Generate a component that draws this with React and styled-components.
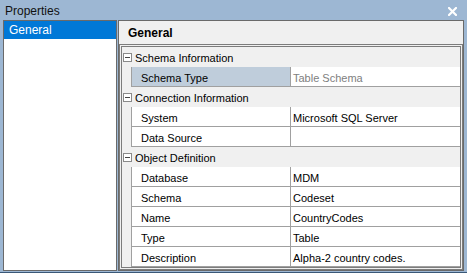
import React from 'react'
import styled, { createGlobalStyle } from 'styled-components'

const GlobalStyle = createGlobalStyle`
  html, body {
    margin: 0;
    padding: 0;
    background: #ffffff;
  }
  body {
    font-family: 'Liberation Sans', Arial, sans-serif;
    font-size: 11px;
  }
`

const Window = styled.div`
  width: 467px;
  height: 273px;
  box-sizing: border-box;
  background: #9db7d3;
  border-bottom: 1px solid #3a5878;
  display: flex;
  flex-direction: column;
`

const TitleBar = styled.div`
  height: 20px;
  box-sizing: border-box;
  flex-shrink: 0;
  display: flex;
  align-items: center;
  justify-content: space-between;
  padding: 2px 10px 0 5px;
  font-size: 12px;
  color: #111;
`

const Body = styled.div`
  flex: 1;
  display: flex;
  gap: 1px;
  padding: 0 3px 1px 3px;
  min-height: 0;
`

const Sidebar = styled.div`
  width: 112px;
  background: #ffffff;
  border: 1px solid #6a6a6a;
  display: flex;
  flex-direction: column;
`

const NavItem = styled.div`
  height: 18px;
  line-height: 19px;
  padding-left: 5px;
  font-size: 12px;
  background: ${(p) => (p.active ? '#0078d7' : 'transparent')};
  color: ${(p) => (p.active ? '#ffffff' : '#000000')};
`

const Panel = styled.div`
  flex: 1;
  background: #f0f0f0;
  border: 1px solid #6a6a6a;
  display: flex;
  flex-direction: column;
  min-width: 0;
`

const PanelHeader = styled.div`
  height: 23px;
  flex-shrink: 0;
  line-height: 24px;
  padding-left: 9px;
  font-weight: bold;
  font-size: 12px;
  color: #000;
`

const Grid = styled.div`
  flex: 1;
  border: 3px double #7c7c7c;
  background: #f0f0f0;
  display: flex;
  flex-direction: column;
  overflow: hidden;
`

const CategoryRow = styled.div`
  height: 20px;
  flex-shrink: 0;
  display: flex;
  align-items: center;
  gap: 3px;
  padding: 1px 0 0 1px;
  box-sizing: border-box;
  color: #000;
`

const Toggle = styled.span`
  width: 9px;
  height: 9px;
  margin-top: -1px;
  box-sizing: border-box;
  border: 1px solid #8a8a8a;
  background: #fff;
  position: relative;
  flex-shrink: 0;
  &::after {
    content: '';
    position: absolute;
    left: 1px;
    right: 1px;
    top: 3px;
    height: 1px;
    background: #444;
  }
`

const PropRow = styled.div`
  height: 20px;
  flex-shrink: 0;
  display: grid;
  grid-template-columns: 10px 159px 1fr;
  box-sizing: border-box;
`

const Gutter = styled.div`
  background: #f0f0f0;
  border-right: 1px solid #a0a0a0;
`

const NameCell = styled.div`
  background: ${(p) => (p.selected ? '#bfcddb' : '#ffffff')};
  border-bottom: 1px solid #a0a0a0;
  border-right: 1px solid #a0a0a0;
  padding: 2px 0 0 9px;
  display: flex;
  align-items: center;
  color: #000;
`

const ValueCell = styled.div`
  background: #ffffff;
  border-bottom: 1px solid #a0a0a0;
  padding: 2px 0 0 2px;
  display: flex;
  align-items: center;
  color: ${(p) => (p.muted ? '#808080' : '#000')};
  white-space: nowrap;
`

const sections = [
  {
    title: 'Schema Information',
    rows: [{ name: 'Schema Type', value: 'Table Schema', selected: true, muted: true }],
  },
  {
    title: 'Connection Information',
    rows: [
      { name: 'System', value: 'Microsoft SQL Server' },
      { name: 'Data Source', value: '' },
    ],
  },
  {
    title: 'Object Definition',
    rows: [
      { name: 'Database', value: 'MDM' },
      { name: 'Schema', value: 'Codeset' },
      { name: 'Name', value: 'CountryCodes' },
      { name: 'Type', value: 'Table' },
      { name: 'Description', value: 'Alpha-2 country codes.' },
    ],
  },
]

const CloseIcon = () => (
  <svg width="9" height="9" viewBox="0 0 9 9">
    <path d="M1 1 L8 8 M8 1 L1 8" stroke="#ffffff" strokeWidth="2.2" strokeLinecap="square" />
  </svg>
)

const App = () => {
  return (
    <>
      <GlobalStyle />
      <Window>
        <TitleBar>
          <span>Properties</span>
          <CloseIcon />
        </TitleBar>
        <Body>
          <Sidebar>
            <NavItem active>General</NavItem>
          </Sidebar>
          <Panel>
            <PanelHeader>General</PanelHeader>
            <Grid>
              {sections.map((s) => (
                <React.Fragment key={s.title}>
                  <CategoryRow>
                    <Toggle />
                    {s.title}
                  </CategoryRow>
                  {s.rows.map((r) => (
                    <PropRow key={r.name}>
                      <Gutter />
                      <NameCell selected={r.selected}>{r.name}</NameCell>
                      <ValueCell muted={r.muted}>{r.value}</ValueCell>
                    </PropRow>
                  ))}
                </React.Fragment>
              ))}
            </Grid>
          </Panel>
        </Body>
      </Window>
    </>
  )
}

export default App
